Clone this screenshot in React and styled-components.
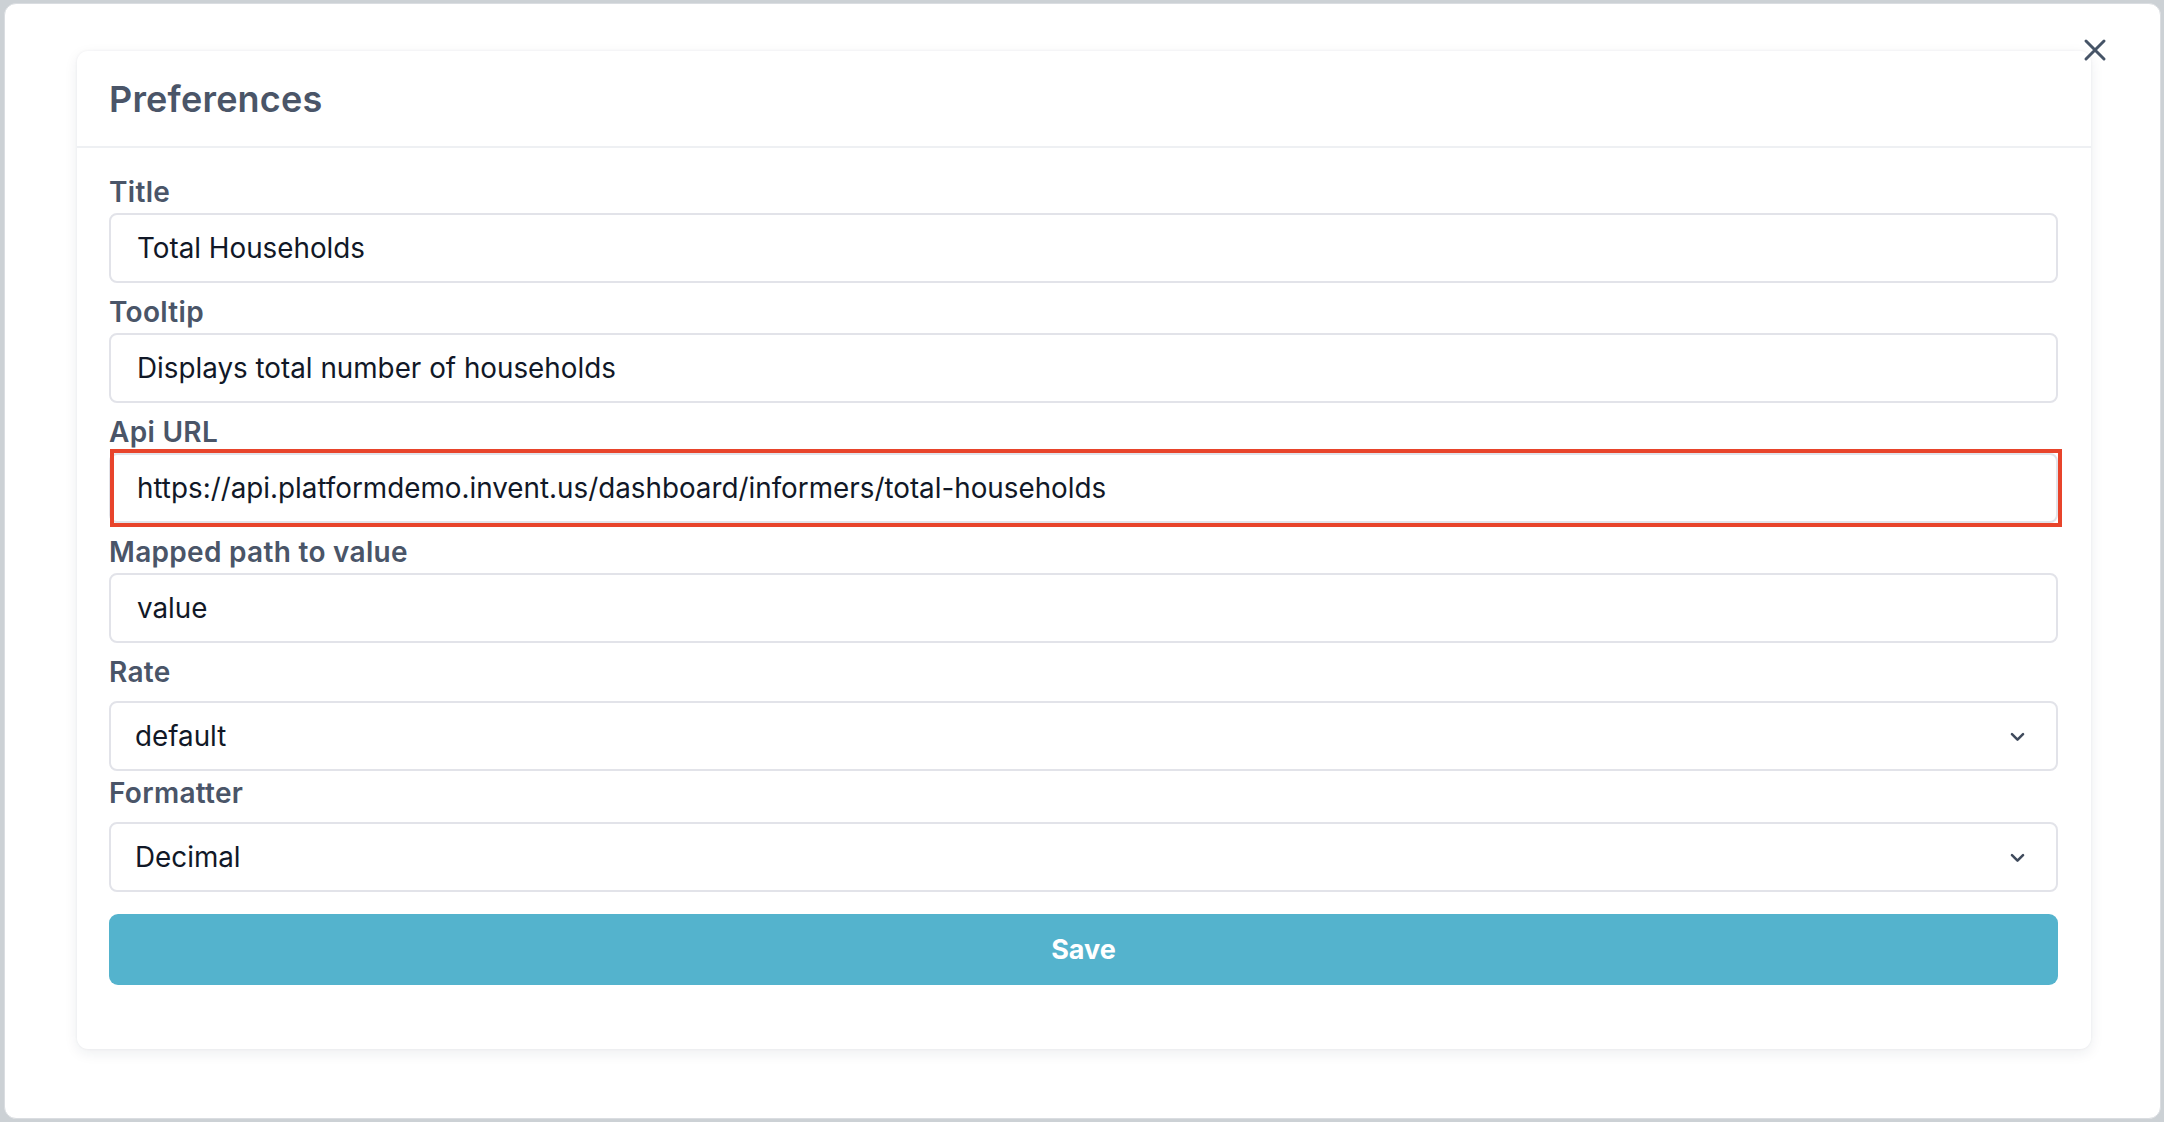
import styled, { createGlobalStyle } from "styled-components";

const GlobalStyle = createGlobalStyle`
  html, body {
    margin: 0;
    padding: 0;
    background: #ccd1d5;
  }
  body {
    font-family: Inter, "Noto Sans", sans-serif;
  }
  * { box-sizing: border-box; }
`;

const Backdrop = styled.div`
  width: 2164px;
  height: 1122px;
  padding: 3px 3px 3px 4px;
`;

const Modal = styled.div`
  position: relative;
  height: 100%;
  background: #ffffff;
  border-radius: 12px;
  border: 1px solid #dadde1;
  padding: 47px 69px 0 72px;
`;

const CloseButton = styled.button`
  position: absolute;
  top: 31px;
  right: 50px;
  width: 30px;
  height: 30px;
  padding: 0;
  border: none;
  background: transparent;
  display: flex;
  align-items: center;
  justify-content: center;
  cursor: pointer;
`;

const Card = styled.div`
  background: #ffffff;
  border-radius: 11px;
  box-shadow: 0 4px 14px rgba(30, 41, 59, 0.08), 0 0 3px rgba(30, 41, 59, 0.06);
`;

const Header = styled.div`
  height: 97px;
  padding: 0 32px;
  display: flex;
  align-items: center;
  border-bottom: 2px solid #eef0f3;
`;

const Heading = styled.h2`
  margin: 0;
  font-size: 36px;
  font-weight: 600;
  color: #4a5568;
  letter-spacing: 0.2px;
`;

const Body = styled.form`
  padding: 26px 33px 64px 32px;
  display: flex;
  flex-direction: column;
`;

const Field = styled.div`
  display: flex;
  flex-direction: column;
  margin-bottom: ${(p) => p.$after || 11}px;
`;

const Label = styled.label`
  font-size: 28px;
  line-height: 36px;
  font-weight: 600;
  letter-spacing: 0.3px;
  color: #4a5568;
  margin-bottom: ${(p) => (p.$select ? 11 : 3)}px;
`;

const InputWrap = styled.div`
  position: relative;
`;

const Input = styled.input`
  width: 100%;
  height: 70px;
  border: 2px solid #e2e3e9;
  border-radius: 8px;
  padding: 0 26px;
  font-family: inherit;
  font-size: 27.8px;
  color: #111827;
  background: #ffffff;
  outline: none;
`;

const Highlight = styled.div`
  position: absolute;
  top: -4px;
  left: 1px;
  right: -4px;
  bottom: -4px;
  border: 4px solid #e8442b;
  pointer-events: none;
`;

const SelectBox = styled.div`
  height: 70px;
  border: 2px solid #e2e3e9;
  border-radius: 8px;
  padding: 0 29px 0 24px;
  display: flex;
  align-items: center;
  justify-content: space-between;
  font-size: 27.8px;
  color: #111827;
`;

const SaveButton = styled.button`
  height: 71px;
  width: 100%;
  border: none;
  border-radius: 9px;
  background: #54b3cd;
  color: #ffffff;
  font-family: inherit;
  font-size: 27px;
  font-weight: 700;
  cursor: pointer;
`;

const Chevron = () => (
  <svg width="19" height="19" viewBox="0 0 24 24" fill="none" stroke="#3f4a5c" strokeWidth="3.2" strokeLinecap="round" strokeLinejoin="round">
    <path d="M5 9l7 7 7-7" />
  </svg>
);

const fields = [
  { label: "Title", value: "Total Households" },
  { label: "Tooltip", value: "Displays total number of households" },
  { label: "Api URL", value: "https://api.platformdemo.invent.us/dashboard/informers/total-households", marked: true },
  { label: "Mapped path to value", value: "value" },
];

const selects = [
  { label: "Rate", value: "default", after: 4 },
  { label: "Formatter", value: "Decimal", after: 22 },
];

const App = () => {
  return (
    <>
      <GlobalStyle />
      <Backdrop>
        <Modal>
          <CloseButton aria-label="close">
            <svg width="24" height="24" viewBox="0 0 24 24" fill="none" stroke="#465467" strokeWidth="3" strokeLinecap="round">
              <path d="M3 3l18 18M21 3L3 21" />
            </svg>
          </CloseButton>
          <Card>
            <Header>
              <Heading>Preferences</Heading>
            </Header>
            <Body onSubmit={(e) => e.preventDefault()}>
              {fields.map((f) => (
                <Field key={f.label}>
                  <Label>{f.label}</Label>
                  <InputWrap>
                    <Input defaultValue={f.value} />
                    {f.marked && <Highlight />}
                  </InputWrap>
                </Field>
              ))}
              {selects.map((s) => (
                <Field key={s.label} $after={s.after}>
                  <Label $select>{s.label}</Label>
                  <SelectBox>
                    <span>{s.value}</span>
                    <Chevron />
                  </SelectBox>
                </Field>
              ))}
              <SaveButton type="submit">Save</SaveButton>
            </Body>
          </Card>
        </Modal>
      </Backdrop>
    </>
  );
};

export default App;
